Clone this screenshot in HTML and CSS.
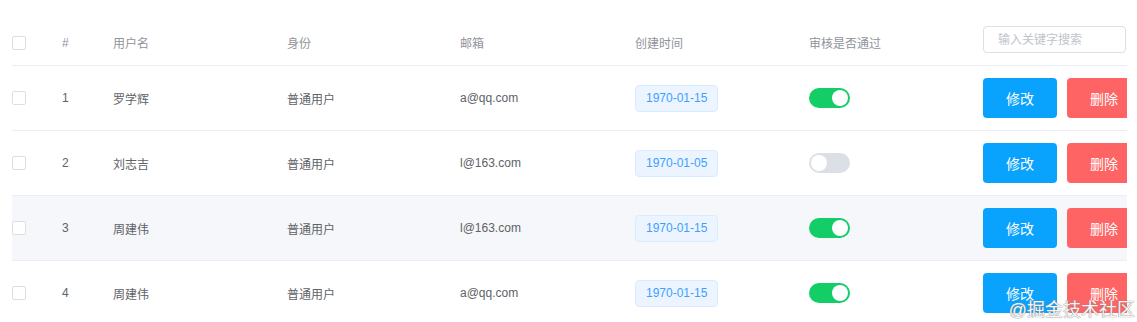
FILE: index.html
```html
<!DOCTYPE html>
<html lang="zh">
  <head>
    <meta charset="utf-8" />
    <title>用户列表</title>
    <link rel="stylesheet" href="styles.css">
  </head>
  <body>
    <main class="page">
      <div class="table">
        <div class="row head">
          <div class="cell"><span class="checkbox"></span></div>
          <div class="cell">#</div>
          <div class="cell">用户名</div>
          <div class="cell">身份</div>
          <div class="cell">邮箱</div>
          <div class="cell">创建时间</div>
          <div class="cell">审核是否通过</div>
          <div class="cell"><input class="search" type="text" placeholder="输入关键字搜索" /></div>
        </div>

        <div class="row">
          <div class="cell"><span class="checkbox"></span></div>
          <div class="cell">1</div>
          <div class="cell">罗学辉</div>
          <div class="cell">普通用户</div>
          <div class="cell">a@qq.com</div>
          <div class="cell"><span class="tag">1970-01-15</span></div>
          <div class="cell"><span class="switch on"></span></div>
          <div class="cell actions">
            <button class="btn edit">修改</button>
            <button class="btn remove">删除</button>
          </div>
        </div>

        <div class="row">
          <div class="cell"><span class="checkbox"></span></div>
          <div class="cell">2</div>
          <div class="cell">刘志吉</div>
          <div class="cell">普通用户</div>
          <div class="cell">l@163.com</div>
          <div class="cell"><span class="tag">1970-01-05</span></div>
          <div class="cell"><span class="switch"></span></div>
          <div class="cell actions">
            <button class="btn edit">修改</button>
            <button class="btn remove">删除</button>
          </div>
        </div>

        <div class="row hover">
          <div class="cell"><span class="checkbox"></span></div>
          <div class="cell">3</div>
          <div class="cell">周建伟</div>
          <div class="cell">普通用户</div>
          <div class="cell">l@163.com</div>
          <div class="cell"><span class="tag">1970-01-15</span></div>
          <div class="cell"><span class="switch on"></span></div>
          <div class="cell actions">
            <button class="btn edit">修改</button>
            <button class="btn remove">删除</button>
          </div>
        </div>

        <div class="row">
          <div class="cell"><span class="checkbox"></span></div>
          <div class="cell">4</div>
          <div class="cell">周建伟</div>
          <div class="cell">普通用户</div>
          <div class="cell">a@qq.com</div>
          <div class="cell"><span class="tag">1970-01-15</span></div>
          <div class="cell"><span class="switch on"></span></div>
          <div class="cell actions">
            <button class="btn edit">修改</button>
            <button class="btn remove">删除</button>
          </div>
        </div>
      </div>
      <div class="watermark">@掘金技术社区</div>
    </main>
  </body>
</html>
```

FILE: styles.css
```css
* {
  box-sizing: border-box;
}

body {
  margin: 0;
  background: #fff;
  font-family: "Liberation Sans", "Noto Sans CJK SC", sans-serif;
  font-size: 12px;
  color: #606266;
}

.page {
  position: relative;
  height: 322px;
  overflow: hidden;
  padding-top: 20px;
}

.table {
  margin-left: 12px;
  width: 1115px;
  overflow: hidden;
}

.row {
  display: grid;
  grid-template-columns: 50px 51px 174px 173px 175px 174px 174px 1fr;
  align-items: center;
  height: 65px;
  border-bottom: 1px solid #ebeef5;
}

.row.head {
  height: 46px;
  color: #909399;
}

.row.hover {
  background: #f5f7fa;
}

.cell {
  white-space: nowrap;
}

.checkbox {
  display: block;
  width: 14px;
  height: 14px;
  border: 1px solid #dcdfe6;
  border-radius: 2px;
  background: #fff;
}

.search {
  display: block;
  width: 143px;
  height: 27px;
  margin-top: -6px;
  padding: 0 14px;
  border: 1px solid #dcdfe6;
  border-radius: 4px;
  font: inherit;
  outline: none;
}

.search::placeholder {
  color: #c0c4cc;
}

.tag {
  display: inline-block;
  height: 27px;
  line-height: 25px;
  padding: 0 10px;
  border: 1px solid #d9ecff;
  border-radius: 4px;
  background: #ecf5ff;
  color: #409eff;
}

.switch {
  display: block;
  position: relative;
  width: 41px;
  height: 20px;
  border-radius: 10px;
  background: #dcdfe6;
}

.switch::after {
  content: "";
  position: absolute;
  top: 2px;
  left: 2px;
  width: 16px;
  height: 16px;
  border-radius: 50%;
  background: #fff;
}

.switch.on {
  background: #13ce66;
}

.switch.on::after {
  left: 23px;
}

.actions {
  display: flex;
  gap: 10px;
}

.btn {
  flex: none;
  width: 74px;
  height: 40px;
  border: none;
  border-radius: 4px;
  color: #fff;
  font: inherit;
  font-size: 14px;
}

.btn.edit {
  background: #09a2fd;
}

.btn.remove {
  background: #ff6464;
}

.watermark {
  position: absolute;
  right: 2px;
  bottom: 1px;
  font-size: 18px;
  color: rgba(255, 255, 255, 0.92);
  text-shadow: 0 0 1px #8a8a8a, 0 0 1px #8a8a8a;
}
```
